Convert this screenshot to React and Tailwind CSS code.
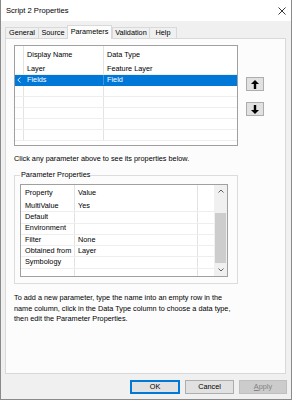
// App.jsx
function ArrowButton({ dir }) {
  return (
    <div className="w-[18px] h-[14px] bg-[#e1e1e1] border border-[#adadad] flex items-center justify-center">
      <svg width="8" height="9" viewBox="0 0 8 9">
        {dir === "up" ? (
          <path d="M4 0 L8 4 L5.2 4 L5.2 9 L2.8 9 L2.8 4 L0 4 Z" fill="#000" />
        ) : (
          <path d="M4 9 L8 5 L5.2 5 L5.2 0 L2.8 0 L2.8 5 L0 5 Z" fill="#000" />
        )}
      </svg>
    </div>
  );
}

function Tab({ label, active, w }) {
  return active ? (
    <div
      className={`h-[14px] ${w} bg-[#fcfcfc] border border-b-0 border-[#d9d9d9] -mb-px relative z-10 flex items-center justify-center`}
    >
      {label}
    </div>
  ) : (
    <div
      className={`h-[11px] ${w} bg-[#f0f0f0] border border-b-0 border-[#d9d9d9] -mr-px flex items-center justify-center`}
    >
      {label}
    </div>
  );
}

function App() {
  const params = [
    { name: "Layer", type: "Feature Layer" },
    { name: "Fields", type: "Field", selected: true },
    {},
    {},
    {},
    {},
    {},
  ];
  const props = [
    ["MultiValue", "Yes"],
    ["Default", ""],
    ["Environment", ""],
    ["Filter", "None"],
    ["Obtained from", "Layer"],
    ["Symbology", ""],
  ];

  return (
    <div
      className="w-[292px] h-[400px] bg-[#f0f0f0] border-x border-b border-[#8a8a8a] flex flex-col text-[7.3px] text-black"
      style={{ fontFamily: "'Liberation Sans', Arial, sans-serif" }}
    >
      {/* title bar */}
      <div className="h-[21px] bg-white flex items-center justify-between pl-[5px] pr-[5px] shrink-0">
        <span className="text-[7.6px]">Script 2 Properties</span>
        <svg width="8" height="8" viewBox="0 0 8 8">
          <path d="M0.5 0.5 L7.5 7.5 M7.5 0.5 L0.5 7.5" stroke="#222" strokeWidth="0.9" />
        </svg>
      </div>

      {/* tabs */}
      <div className="h-[13px] mt-[4px] ml-[4px] flex items-end shrink-0">
        <Tab label="General" w="w-[34px]" />
        <Tab label="Source" w="w-[30px]" />
        <Tab label="Parameters" w="w-[45px]" active />
        <Tab label="Validation" w="w-[38px]" />
        <Tab label="Help" w="w-[28px]" />
      </div>

      {/* tab panel */}
      <div className="h-[336px] ml-[4px] mr-[5px] bg-[#fcfcfc] border border-[#d9d9d9] flex flex-col shrink-0">
        <div className="flex">
          {/* parameter list */}
          <div className="ml-[8px] mt-[6px] w-[224px] h-[101px] border border-[#a0a0a0] bg-white overflow-hidden">
            <div className="flex h-[18px]">
              <div className="w-[9px] border-r border-[#e3e3e3]" />
              <div className="w-[80px] border-r border-[#e3e3e3] pl-[3px] flex items-center">
                Display Name
              </div>
              <div className="flex-1 pl-[3px] flex items-center">Data Type</div>
            </div>
            {params.map((p, i) => (
              <div
                key={i}
                className={`flex h-[11px] border-b ${
                  p.selected ? "border-[#0078d7]" : "border-[#eeeeee]"
                }`}
              >
                <div
                  className={`w-[9px] border-r flex items-center justify-center ${
                    p.selected ? "bg-[#0078d7] border-[#0078d7]" : "border-[#e3e3e3]"
                  }`}
                >
                  {p.selected && (
                    <svg width="4" height="6" viewBox="0 0 4 6">
                      <path d="M3.5 0.5 L0.8 3 L3.5 5.5" fill="none" stroke="#cfe4f7" strokeWidth="1" />
                    </svg>
                  )}
                </div>
                <div
                  className={`w-[80px] border-r pl-[3px] flex items-center ${
                    p.selected ? "bg-[#0078d7] text-white border-[#3f97df]" : "border-[#e3e3e3]"
                  }`}
                >
                  {p.name}
                </div>
                <div
                  className={`flex-1 pl-[3px] flex items-center ${
                    p.selected ? "bg-[#0078d7] text-white" : ""
                  }`}
                >
                  {p.type}
                </div>
              </div>
            ))}
          </div>

          {/* up / down */}
          <div className="ml-[8px] mt-[38px] flex flex-col gap-[11px]">
            <ArrowButton dir="up" />
            <ArrowButton dir="down" />
          </div>
        </div>

        <div className="ml-[8px] mt-[8px] h-[10px] flex items-center">
          Click any parameter above to see its properties below.
        </div>

        {/* parameter properties group */}
        <div className="ml-[8px] mt-[11px] w-[224px] h-[109px] border border-[#dcdcdc] relative">
          <span className="absolute -top-[6px] left-[5px] px-[1px] bg-[#fcfcfc] leading-[10px]">
            Parameter Properties
          </span>
          <div className="ml-[5px] mt-[8px] w-[208px] h-[93px] border border-[#a0a0a0] bg-white flex overflow-hidden">
            <div className="flex-1 flex flex-col">
              <div className="flex h-[16px] shrink-0">
                <div className="w-[54px] border-r border-[#e3e3e3] pl-[4px] flex items-center">Property</div>
                <div className="w-[123px] border-r border-[#e3e3e3] pl-[3px] flex items-center">Value</div>
                <div className="flex-1" />
              </div>
              {props.map(([k, v]) => (
                <div key={k} className="flex h-[11.3px] border-b border-[#eeeeee] shrink-0">
                  <div className="w-[54px] border-r border-[#e3e3e3] pl-[4px] flex items-center">{k}</div>
                  <div className="w-[123px] border-r border-[#e3e3e3] pl-[3px] flex items-center">{v}</div>
                  <div className="flex-1" />
                </div>
              ))}
              <div className="flex flex-1">
                <div className="w-[54px] border-r border-[#e3e3e3]" />
                <div className="w-[123px] border-r border-[#e3e3e3]" />
              </div>
            </div>
            {/* scrollbar */}
            <div className="w-[13px] bg-[#f0f0f0] flex flex-col items-center">
              <div className="h-[12px] flex items-center justify-center">
                <svg width="6" height="4" viewBox="0 0 6 4">
                  <path d="M0.5 3.5 L3 1 L5.5 3.5" fill="none" stroke="#606060" strokeWidth="1" />
                </svg>
              </div>
              <div className="w-[11px] h-[50px] mt-[16px] bg-[#cdcdcd]" />
              <div className="flex-1" />
              <div className="h-[12px] flex items-center justify-center">
                <svg width="6" height="4" viewBox="0 0 6 4">
                  <path d="M0.5 0.5 L3 3 L5.5 0.5" fill="none" stroke="#606060" strokeWidth="1" />
                </svg>
              </div>
            </div>
          </div>
        </div>

        <p className="ml-[8px] mt-[9px] leading-[10.5px]">
          To add a new parameter, type the name into an empty row in the
          <br />
          name column, click in the Data Type column to choose a data type,
          <br />
          then edit the Parameter Properties.
        </p>
      </div>

      {/* buttons */}
      <div className="flex justify-end gap-[5px] mt-[6px] mr-[4px]">
        <div className="w-[50px] h-[14px] bg-[#e1e1e1] border border-[#0078d7] outline outline-1 -outline-offset-2 outline-[#0078d7] flex items-center justify-center">
          OK
        </div>
        <div className="w-[49px] h-[14px] bg-[#e1e1e1] border border-[#adadad] flex items-center justify-center">
          Cancel
        </div>
        <div className="w-[48px] h-[14px] bg-[#cccccc] border border-[#bfbfbf] text-[#838383] flex items-center justify-center">
          <span>
            <span className="underline">A</span>pply
          </span>
        </div>
      </div>
    </div>
  );
}

export default App;
